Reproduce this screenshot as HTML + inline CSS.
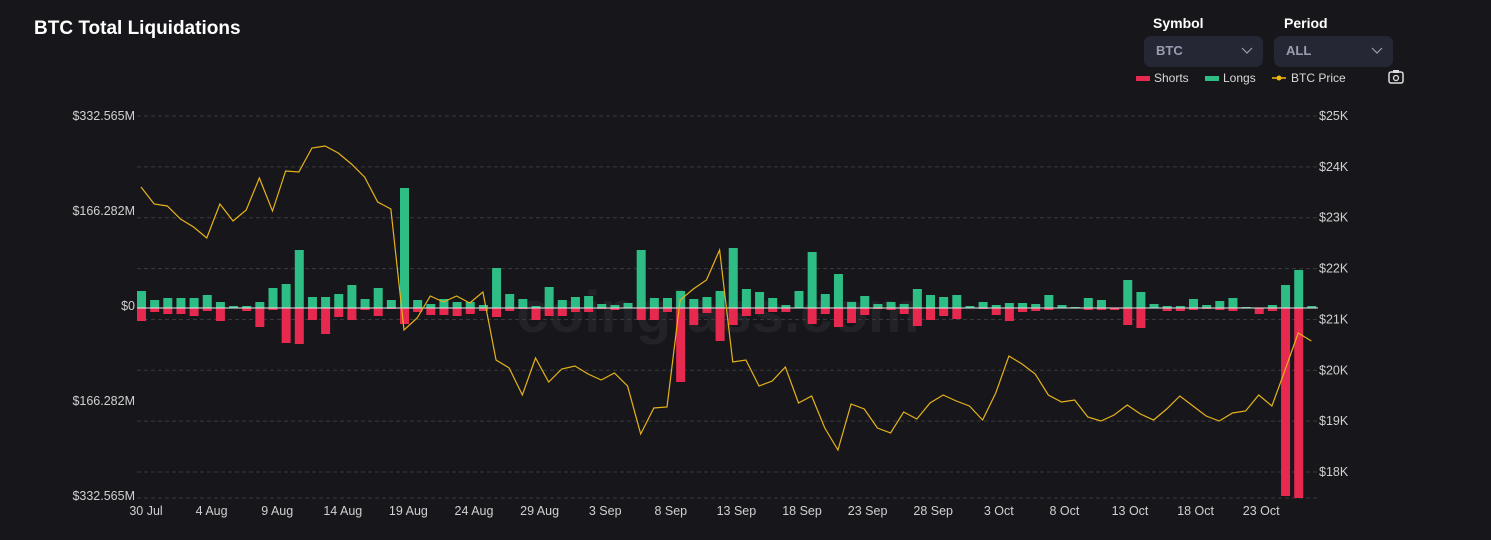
<!DOCTYPE html>
<html><head><meta charset="utf-8"><style>
html,body{margin:0;padding:0;background:#17171b;width:1491px;height:540px;overflow:hidden;font-family:"Liberation Sans",sans-serif}
svg{position:absolute;left:0;top:0}
</style></head><body>
<svg id="s" width="1491" height="540" xmlns="http://www.w3.org/2000/svg">
<text x="34" y="34" fill="#fff" font-size="19" font-weight="bold">BTC Total Liquidations</text>
<text x="1153" y="28" fill="#fff" font-size="14" font-weight="bold">Symbol</text>
<text x="1284" y="28" fill="#fff" font-size="14" font-weight="bold">Period</text>
<rect x="1144" y="36" width="119" height="31" rx="7" fill="#252734"/>
<rect x="1274" y="36" width="119" height="31" rx="7" fill="#252734"/>
<text x="1156" y="55" fill="#9a9db0" font-size="13" font-weight="bold">BTC</text>
<text x="1286" y="55" fill="#9a9db0" font-size="13" font-weight="bold">ALL</text>
<path d="M1242 48l5 5 5-5M1372 48l5 5 5-5" stroke="#9a9db0" stroke-width="1.2" fill="none"/>
<rect x="1136" y="76" width="14" height="5" fill="#e7294f"/>
<text x="1154" y="82" fill="#d8d8d8" font-size="12">Shorts</text>
<rect x="1205" y="76" width="14" height="5" fill="#2dbd85"/>
<text x="1223" y="82" fill="#d8d8d8" font-size="12">Longs</text>
<line x1="1272" y1="78" x2="1286" y2="78" stroke="#f0b90b" stroke-width="1.5"/>
<circle cx="1279" cy="78" r="2.5" fill="#f0b90b"/>
<text x="1291" y="82" fill="#d8d8d8" font-size="12">BTC Price</text>
<rect x="1389" y="72" width="14" height="11" rx="2" fill="none" stroke="#ddd" stroke-width="1.5"/>
<rect x="1393" y="70" width="6" height="3" fill="#ddd"/>
<circle cx="1396" cy="78" r="2.5" fill="none" stroke="#ddd" stroke-width="1.3"/>
<text x="718" y="332" fill="#232327" font-size="58" font-weight="bold" text-anchor="middle">coinglass.com</text>
<g id="grid"></g><g id="bars"></g><g id="txt" font-size="12.5" fill="#d0d0d0"></g>
<polyline id="price" fill="none" stroke="#e6b21a" stroke-width="1.2" points=""/>
</svg>
<script>
var ns="http://www.w3.org/2000/svg";
function el(p,t,a,tx){var e=document.createElementNS(ns,t);for(var k in a)e.setAttribute(k,a[k]);if(tx)e.textContent=tx;document.getElementById(p).appendChild(e);}
for(var i=0;i<8;i++){var y=116+i*50.86;el("grid","line",{x1:137,x2:1318,y1:y,y2:y,stroke:"#38383e","stroke-dasharray":"4 3"});el("txt","text",{x:1319,y:y+4},"$"+(25-i)+"K");}
el("grid","line",{x1:137,x2:1318,y1:498,y2:498,stroke:"#38383e","stroke-dasharray":"4 3"});
var L=["$332.565M","$166.282M","$0","$166.282M","$332.565M"];
for(var i=0;i<5;i++)el("txt","text",{x:135,y:120+i*95,"text-anchor":"end"},L[i]);
var D=["30 Jul","4 Aug","9 Aug","14 Aug","19 Aug","24 Aug","29 Aug","3 Sep","8 Sep","13 Sep","18 Sep","23 Sep","28 Sep","3 Oct","8 Oct","13 Oct","18 Oct","23 Oct"];
for(var i=0;i<D.length;i++)el("txt","text",{x:146+i*65.6,y:515,"text-anchor":"middle"},D[i]);
var lg=[17,8,10,10,10,13,6,2,2,6,20,24,58,11,11,14,23,9,20,8,120,8,4,9,6,6,3,40,14,9,2,21,8,11,12,4,3,5,58,10,10,17,9,11,17,60,19,16,10,3,17,56,14,34,6,12,4,6,4,19,13,11,13,2,6,3,5,5,4,13,3,1,10,8,0,28,16,4,2,2,9,3,7,10,1,0,3,23,38,2];
var sh=[13,4,6,6,8,3,13,0,3,19,2,35,36,12,26,9,12,2,8,1,16,4,7,7,8,6,3,9,3,1,12,8,8,4,4,1,2,0,12,12,4,74,17,5,33,17,8,6,4,4,0,16,6,19,15,7,1,2,6,18,12,8,11,0,1,7,13,4,3,2,0,0,2,2,2,17,20,0,3,3,2,1,2,3,0,6,3,188,190,0];
for(var i=0;i<lg.length;i++){var x=137+i*13.15;
if(lg[i])el("bars","rect",{x:x,y:308-lg[i],width:9,height:lg[i],fill:"#2dbd85"});
if(sh[i])el("bars","rect",{x:x,y:308,width:9,height:sh[i],fill:"#e7294f"});}
el("bars","line",{x1:137,x2:1318,y1:308,y2:308,stroke:"#e8e8e8","stroke-width":1});
var P=[187,204,206,219,227,238,204,221,210,178,211,171,172,148,146,153,164,177,202,209,330,318,296,302,296,303,292,360,368,395,358,382,369,366,374,380,373,386,434,408,407,300,289,280,250,362,360,386,381,367,403,396,428,450,404,409,428,433,412,419,403,395,401,406,420,393,356,364,374,395,402,400,417,421,415,405,414,420,409,396,406,416,421,413,411,395,406,370,333,341];
var s="";for(var i=0;i<P.length;i++){var x=141+i*13.15;s+=x+","+P[i]+" ";}
document.getElementById("price").setAttribute("points",s);
</script>
</body></html>
